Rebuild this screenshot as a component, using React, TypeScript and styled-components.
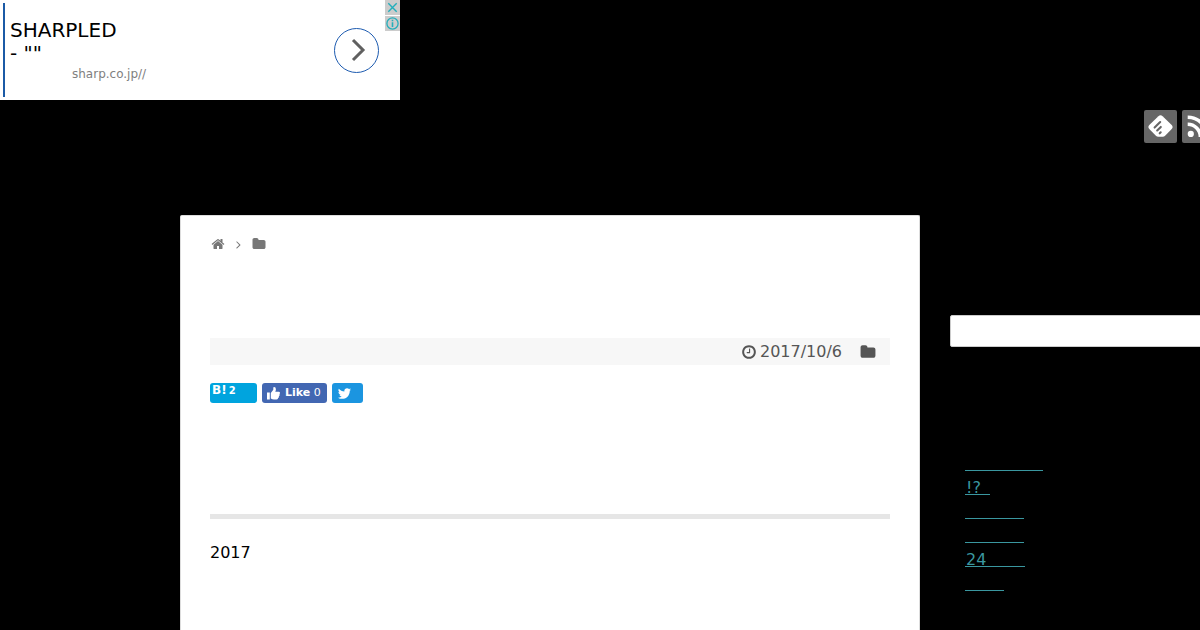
import React from "react";
import styled, { createGlobalStyle } from "styled-components";

const GlobalStyle = createGlobalStyle`
  * { box-sizing: border-box; }
  body {
    margin: 0;
    background: #000;
    color: #000;
    font: 16px/26px "DejaVu Sans", sans-serif;
  }
`;

const Page = styled.div`
  min-height: 100vh;
  overflow: hidden;
`;

const Ad = styled.aside`
  position: relative;
  display: flex;
  align-items: center;
  justify-content: space-between;
  width: 400px;
  height: 100px;
  padding: 3px 21px 3px 3px;
  background: #fff;
`;

const AdCopy = styled.div`
  align-self: stretch;
  padding: 16px 0 0 5px;
  border-left: 2px solid #1b5aa6;
`;

const AdTitle = styled.a`
  display: block;
  color: #000;
  font-size: 20px;
  line-height: 23px;
  text-decoration: none;
`;

const AdSite = styled.a`
  display: block;
  padding-left: 62px;
  color: #808080;
  font-size: 12px;
  line-height: 18px;
  text-decoration: none;
`;

const AdGo = styled.button`
  display: grid;
  place-items: center;
  width: 45px;
  height: 45px;
  padding: 0;
  border: 1px solid #1d5bb0;
  border-radius: 50%;
  background: #fff;
`;

const AdControls = styled.div`
  position: absolute;
  top: 0;
  right: 0;
  display: grid;
  gap: 1px;
`;

const AdControl = styled.button`
  display: grid;
  place-items: center;
  width: 15px;
  height: 15px;
  padding: 0;
  border: 0;
  background: #ccc;
`;

const Header = styled.header`
  display: flex;
  gap: 5px;
  height: 115px;
  padding: 10px 0 0 1144px;
`;

const Follow = styled.a`
  display: grid;
  flex: none;
  place-items: center;
  width: 33px;
  height: 33px;
  border-radius: 2px;
  background: #666;
`;

const Columns = styled.div`
  display: flex;
  gap: 30px;
  padding-left: 180px;
`;

const Article = styled.main`
  flex: none;
  width: 740px;
  min-height: calc(100vh - 215px);
  padding: 16px 29px;
  border: 1px solid #ddd;
  border-bottom: 0;
  border-radius: 2px 2px 0 0;
  background: #fff;
`;

const Breadcrumb = styled.nav`
  display: flex;
  align-items: center;
  height: 24px;
  gap: 7px;
  padding-left: 1px;
`;

const Crumb = styled.a`
  display: flex;
`;

const Meta = styled.div`
  display: flex;
  align-items: center;
  justify-content: flex-end;
  gap: 18px;
  height: 27px;
  margin-top: 82px;
  padding-right: 14px;
  background: #f7f7f7;
  color: #555;
`;

const MetaItem = styled.span`
  display: flex;
  align-items: center;
  gap: 3px;
`;

const Shares = styled.div`
  display: flex;
  gap: 5px;
  margin-top: 18px;
`;

const Share = styled.button<{ $width: number; $color: string }>`
  display: flex;
  align-items: center;
  gap: 5px;
  width: ${(p) => p.$width}px;
  height: 20px;
  padding: 0 5px;
  border: 0;
  border-radius: 3px;
  background: ${(p) => p.$color};
  color: #fff;
  font: 11px/20px "DejaVu Sans", sans-serif;
  white-space: nowrap;
`;

const Hatena = styled(Share)`
  align-items: baseline;
  gap: 2px;
  padding: 0 2px 6px;
  font-size: 10px;
  font-weight: bold;
  line-height: 14px;
`;

const HatenaMark = styled.span`
  font-size: 12px;
`;

const Heading = styled.h2`
  height: 116px;
  margin: 0 0 20px;
  border-bottom: 5px solid #e6e6e6;
`;

const Text = styled.p`
  margin: 0;
  line-height: 28px;
`;

const Sidebar = styled.aside`
  flex: none;
  width: 300px;
  padding-top: 100px;
`;

const Search = styled.input`
  display: block;
  width: 100%;
  height: 32px;
  padding: 0 10px;
  border: 1px solid #ccc;
  border-radius: 2px;
  background: #fff;
  font: inherit;
`;

const Recent = styled.ul`
  margin: 105px 0 0;
  padding: 0 15px;
  list-style: none;
`;

const RecentItem = styled.li`
  height: 24px;
`;

const RecentLink = styled.a<{ $width: number }>`
  display: block;
  width: ${(p) => p.$width}px;
  height: 19px;
  padding-left: 1px;
  border-bottom: 1px solid #3a979f;
  color: #3a979f;
  line-height: 24px;
  text-decoration: none;
`;

const paths = {
  home: "M1472 992v480q0 26-19 45t-45 19h-384v-384h-256v384h-384q-26 0-45-19t-19-45v-480q0-1 .5-3t.5-3l575-474 575 474q1 2 1 6zm223-69l-62 74q-8 9-21 11h-3q-13 0-21-7l-692-577-692 577q-12 8-24 7-13-2-21-11l-62-74q-8-10-7-23.5t11-21.5l719-599q32-26 76-26t76 26l244 204v-195q0-14 9-23t23-9h192q14 0 23 9t9 23v408l219 182q10 8 11 21.5t-7 23.5z",
  folder: "M1728 608v704q0 92-66 158t-158 66h-1216q-92 0-158-66t-66-158v-960q0-92 66-158t158-66h320q92 0 158 66t66 158v32h672q92 0 158 66t66 158z",
  clock: "M1024 544v448q0 14-9 23t-23 9h-320q-14 0-23-9t-9-23v-64q0-14 9-23t23-9h224v-352q0-14 9-23t23-9h64q14 0 23 9t9 23zm416 352q0-148-73-273t-198-198-273-73-273 73-198 198-73 273 73 273 198 198 273 73 273-73 198-198 73-273zm224 0q0 209-103 385.5t-279.5 279.5-385.5 103-385.5-103-279.5-279.5-103-385.5 103-385.5 279.5-279.5 385.5-103 385.5 103 279.5 279.5 103 385.5z",
  angle: "M1171 960q0 13-10 23l-466 466q-10 10-23 10t-23-10l-50-50q-10-10-10-23t10-23l393-393-393-393q-10-10-10-23t10-23l50-50q10-10 23-10t23 10l466 466q10 10 10 23z",
  bird: "M1684 408q-67 98-162 167 1 14 1 42 0 130-38 259.5t-115.5 248.5-184.5 210.5-258 146-323 54.5q-271 0-496-145 35 4 78 4 225 0 401-138-105-2-188-64.5t-114-159.5q33 5 61 5 43 0 85-11-112-23-185.5-111.5t-73.5-205.5v-4q68 38 146 41-66-44-105-115t-39-154q0-88 44-163 121 149 294.5 238.5t371.5 99.5q-8-38-8-74 0-134 94.5-228.5t228.5-94.5q140 0 236 102 109-21 205-78-37 115-142 178 93-10 186-50z",
};

function Icon({ name, size, color = "currentColor" }: { name: keyof typeof paths; size: number; color?: string }) {
  return (
    <svg width={size} height={size} viewBox="0 0 1792 1792" fill={color} aria-hidden="true">
      <path d={paths[name]} />
    </svg>
  );
}

const recent = [
  { text: "", width: 78 },
  { text: "!?", width: 25 },
  { text: "", width: 59 },
  { text: "", width: 59 },
  { text: "24", width: 60 },
  { text: "", width: 39 },
];

export default function App() {
  return (
    <Page>
      <GlobalStyle />
      <Ad>
        <AdCopy>
          <AdTitle href="#">SHARPLED<br />- ""</AdTitle>
          <AdSite href="#">sharp.co.jp//</AdSite>
        </AdCopy>
        <AdGo aria-label="Open">
          <svg width="24" height="24" viewBox="0 0 24 24" fill="none" stroke="#606060" strokeWidth="3">
            <path d="M8 2l10 10L8 22" />
          </svg>
        </AdGo>
        <AdControls>
          <AdControl aria-label="Close">
            <svg width="15" height="15" viewBox="0 0 15 15" fill="none" stroke="#22aebb" strokeWidth="1.4">
              <path d="M3.3 3.3l8.4 8.4M11.7 3.3l-8.4 8.4" />
            </svg>
          </AdControl>
          <AdControl aria-label="Information">
            <svg width="15" height="15" viewBox="0 0 15 15" fill="none" stroke="#22aebb" strokeWidth="1.3">
              <circle cx="7.5" cy="7.5" r="5.6" />
              <path d="M7.5 6.2v4.8M7.5 3.8v1.4" strokeWidth="1.6" />
            </svg>
          </AdControl>
        </AdControls>
      </Ad>

      <Header>
        <Follow href="#" aria-label="Feedly">
          <svg width="25" height="25" viewBox="0 0 25 25">
            <path d="M10.4 2.2q2.1-1.9 4.2 0l9.1 8.9q1.8 1.9 0 3.8l-6.6 6.9q-1 1-2.4 1h-4.4q-1.4 0-2.4-1l-6.6-6.9q-1.8-1.9 0-3.8z" fill="#fff" />
            <path d="M6.6 13.6l5.6-5.6M9.2 16.5l3.6-3.6M11.7 19.3l1-1" stroke="#666" strokeWidth="2.1" strokeLinecap="round" />
          </svg>
        </Follow>
        <Follow href="#" aria-label="RSS">
          <svg width="23" height="23" viewBox="0 0 23 23" fill="none" stroke="#fff" strokeWidth="3.6">
            <circle cx="3.8" cy="18.9" r="3.1" fill="#fff" stroke="none" />
            <path d="M.7 9.3A12.7 12.7 0 0 1 13.4 22M.7 2.3A19.7 19.7 0 0 1 20.4 22" />
          </svg>
        </Follow>
      </Header>

      <Columns>
        <Article>
          <Breadcrumb aria-label="Breadcrumb">
            <Crumb href="#" aria-label="Home"><Icon name="home" size={14} color="#777" /></Crumb>
            <Icon name="angle" size={13} color="#777" />
            <Crumb href="#" aria-label="Category"><Icon name="folder" size={14} color="#777" /></Crumb>
          </Breadcrumb>
          <Meta>
            <MetaItem><Icon name="clock" size={16} /><time dateTime="2017-10-06">2017/10/6</time></MetaItem>
            <MetaItem><Icon name="folder" size={16} /></MetaItem>
          </Meta>
          <Shares>
            <Hatena $width={47} $color="#00a4de"><HatenaMark>B!</HatenaMark>2</Hatena>
            <Share $width={65} $color="#4267b2">
              <svg width="13" height="13" viewBox="0 0 13 13" fill="#fff" aria-hidden="true">
                <path d="M0 5.6h2.8V12.5H0zM3.8 6l2.5-3.2V.8q0-.8.8-.8 1.8 0 1.8 2.2 0 1.1-.6 2.6h3.4q1.3 0 1.3 1.2 0 .8-.7 1.1.5.4.4 1-.1.8-.9 1.1.3.5.1 1-.2.7-1 .9.2.4 0 .7-.3.6-1.4.6H7q-1.5 0-3.2-.9z" />
              </svg>
              <span><b>Like</b> 0</span>
            </Share>
            <Share $width={31} $color="#1b95e0" aria-label="Tweet"><Icon name="bird" size={15} /></Share>
          </Shares>
          <Heading />
          <Text>2017</Text>
        </Article>

        <Sidebar>
          <Search type="search" aria-label="Search" />
          <Recent>
            {recent.map((item, i) => (
              <RecentItem key={i}>
                <RecentLink href="#" $width={item.width}>{item.text}</RecentLink>
              </RecentItem>
            ))}
          </Recent>
        </Sidebar>
      </Columns>
    </Page>
  );
}
